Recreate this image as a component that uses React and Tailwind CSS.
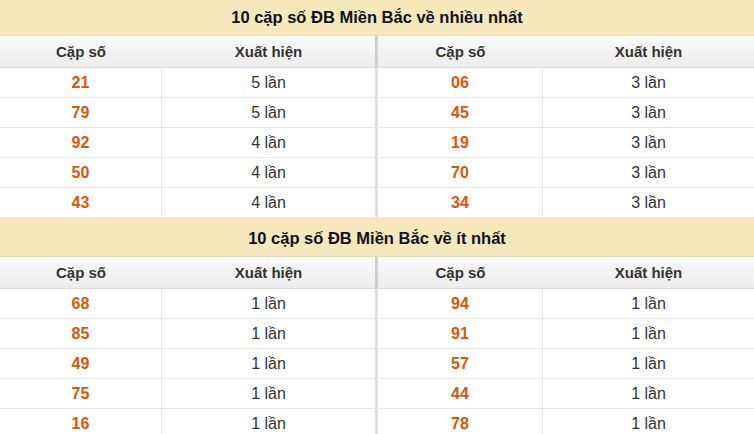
import React from 'react';

const most = [
  ['21', '5', '06', '3'],
  ['79', '5', '45', '3'],
  ['92', '4', '19', '3'],
  ['50', '4', '70', '3'],
  ['43', '4', '34', '3'],
];

const least = [
  ['68', '1', '94', '1'],
  ['85', '1', '91', '1'],
  ['49', '1', '57', '1'],
  ['75', '1', '44', '1'],
  ['16', '1', '78', '1'],
];

const Table = ({ title, rows }) => (
  <div>
    <div className="h-[39px] flex items-center justify-center pt-[2px] bg-[#f6e7bd] border-b border-[#e6dcc0] text-[16.5px] font-bold text-[#111]">
      {title}
    </div>
    <div className="grid grid-cols-[162px_213px_3px_165px_1fr] h-[32px] pt-[2px] bg-gradient-to-b from-[#fafafa] to-[#ececec] border-b border-[#dcdcdc] text-[15px] font-bold text-[#333]">
      <div className="flex items-center justify-center">Cặp số</div>
      <div className="flex items-center justify-center">Xuất hiện</div>
      <div className="bg-[#cfcfcf] -mt-[2px]" />
      <div className="flex items-center justify-center">Cặp số</div>
      <div className="flex items-center justify-center">Xuất hiện</div>
    </div>
    {rows.map((r, i) => (
      <div
        key={i}
        className="grid grid-cols-[162px_213px_3px_165px_1fr] h-[30px] border-b border-[#e8e8e8] text-[16px]"
      >
        <div className="flex items-center justify-center border-r border-[#e8e8e8] font-bold text-[#d9560b]">{r[0]}</div>
        <div className="flex items-center justify-center text-[#333]">{r[1]} lần</div>
        <div className="bg-[#e0e0e0]" />
        <div className="flex items-center justify-center border-r border-[#e8e8e8] font-bold text-[#d9560b]">{r[2]}</div>
        <div className="flex items-center justify-center text-[#333]">{r[3]} lần</div>
      </div>
    ))}
  </div>
);

export default function App() {
  return (
    <div className="w-[754px] h-[434px] overflow-hidden bg-white font-['Liberation_Sans',Arial,sans-serif]">
      <div className="-mt-[3px]">
        <Table title="10 cặp số ĐB Miền Bắc về nhiều nhất" rows={most} />
        <Table title="10 cặp số ĐB Miền Bắc về ít nhất" rows={least} />
      </div>
    </div>
  );
}
